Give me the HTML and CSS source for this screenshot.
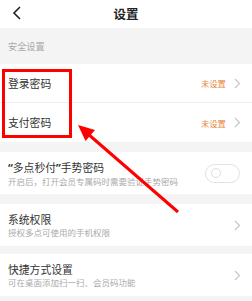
FILE: index.html
```html
<!DOCTYPE html>
<html lang="zh-CN">
<head>
    <meta charset="UTF-8">
    <meta name="viewport" content="width=device-width, initial-scale=1.0">
    <title>设置</title>
    <link rel="stylesheet" href="styles.css">
</head>
<body>
<div class="page">
    <header class="topbar">
        <svg class="back" width="10" height="14" viewBox="0 0 10 14"><path d="M8 1 L2 7 L8 13" fill="none" stroke="#222" stroke-width="1.6"/></svg>
        <h1 class="title">设置</h1>
    </header>

    <div class="group-label">安全设置</div>

    <div class="card">
        <div class="row row-line">
            <span class="row-title">登录密码</span>
            <span class="row-value">未设置</span>
            <svg class="chev" width="7" height="11" viewBox="0 0 7 11"><path d="M1 1 L5.5 5.5 L1 10" fill="none" stroke="#c4c4c4" stroke-width="1.1"/></svg>
        </div>
        <div class="row">
            <span class="row-title">支付密码</span>
            <span class="row-value">未设置</span>
            <svg class="chev" width="7" height="11" viewBox="0 0 7 11"><path d="M1 1 L5.5 5.5 L1 10" fill="none" stroke="#c4c4c4" stroke-width="1.1"/></svg>
        </div>
    </div>

    <div class="card">
        <div class="row row-tall">
            <div class="row-text">
                <div class="row-title"><span class="quote">“</span>多点秒付<span class="quote">”</span>手势密码</div>
                <div class="row-sub">开启后，打开会员专属码时需要验证手势密码</div>
            </div>
            <div class="switch"><span class="knob"></span></div>
        </div>
    </div>

    <div class="card">
        <div class="row row-tall">
            <div class="row-text">
                <div class="row-title">系统权限</div>
                <div class="row-sub">授权多点可使用的手机权限</div>
            </div>
            <svg class="chev" width="7" height="11" viewBox="0 0 7 11"><path d="M1 1 L5.5 5.5 L1 10" fill="none" stroke="#c4c4c4" stroke-width="1.1"/></svg>
        </div>
    </div>

    <div class="card card-last">
        <div class="row row-tall">
            <div class="row-text">
                <div class="row-title">快捷方式设置</div>
                <div class="row-sub">可在桌面添加扫一扫、会员码功能</div>
            </div>
            <svg class="chev" width="7" height="11" viewBox="0 0 7 11"><path d="M1 1 L5.5 5.5 L1 10" fill="none" stroke="#c4c4c4" stroke-width="1.1"/></svg>
        </div>
    </div>

    <!-- red annotation on top -->
    <div class="mark-box"></div>
    <svg class="mark-arrow" width="252" height="301" viewBox="0 0 252 301">
        <line x1="178" y1="212" x2="88" y2="134" stroke="#f00" stroke-width="3"/>
        <polygon points="78,125 85.5,141 95,130" fill="#f00"/>
    </svg>
</div>
</body>
</html>
```

FILE: styles.css
```css
*{
    box-sizing: border-box;
}
body{
    margin: 0;
    background-color: #f4f4f4;
    font-family: "Noto Sans CJK SC", "Noto Sans", sans-serif;
    color: #333;
}
.page{
    position: relative;
    width: 252px;
    height: 301px;
    overflow: hidden;
}
.topbar{
    height: 28px;
    background-color: #fff;
    display: flex;
    align-items: center;
    justify-content: center;
    position: relative;
}
.back{
    position: absolute;
    left: 12px;
    top: 6px;
}
.title{
    margin: 0;
    font-size: 12.5px;
    font-weight: 700;
    color: #222;
    line-height: 1;
}
.group-label{
    height: 36px;
    padding-left: 8px;
    display: flex;
    align-items: center;
    font-size: 9.2px;
    color: #aaa;
}
.card{
    background-color: #fff;
    margin-bottom: 10px;
}
.card-last{
    margin-top: -2px;
}
.row{
    height: 39px;
    display: flex;
    align-items: center;
    padding: 0 11px 0 8px;
}
.row-line{
    border-bottom: 1px solid #f0f0f0;
}
.row-tall{
    height: 42px;
}
.row-title{
    font-size: 10.8px;
    color: #333;
    line-height: 1.2;
}
.row .row-title{
    flex: 1;
}
.quote{
    font-family: "Noto Sans", sans-serif;
    font-weight: 700;
}
.row-text{
    flex: 1;
    padding-top: 1px;
}
.row-sub{
    font-size: 8.5px;
    color: #aaa;
    line-height: 1.2;
    margin-top: 1px;
}
.row-value{
    font-size: 8.4px;
    color: #e8873a;
    margin-right: 8px;
}
.chev{
    display: block;
}
.switch{
    width: 35px;
    height: 19px;
    border: 1px solid #e2e2e2;
    border-radius: 10px;
    margin-right: 1px;
    display: flex;
    align-items: center;
    padding-left: 5px;
}
.knob{
    width: 10px;
    height: 10px;
    border: 1px solid #ddd;
    border-radius: 50%;
}
.mark-box{
    position: absolute;
    left: 2px;
    top: 69px;
    width: 70px;
    height: 69px;
    border: 3px solid #f00;
}
.mark-arrow{
    position: absolute;
    left: 0;
    top: 0;
}
```
